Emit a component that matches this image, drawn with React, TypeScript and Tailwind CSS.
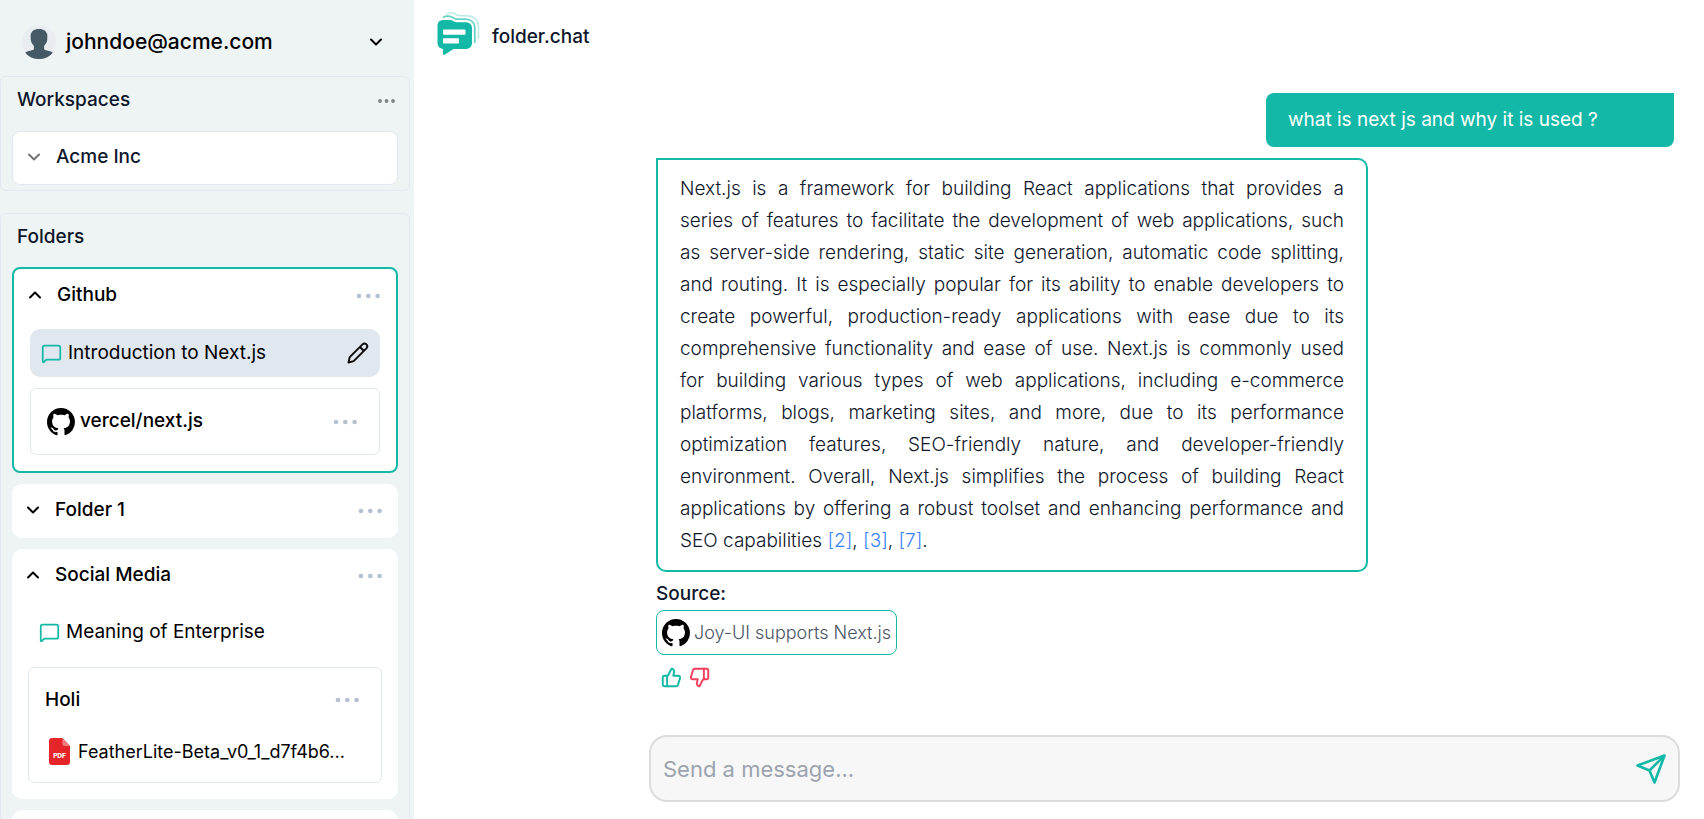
import { useState } from "react";
import type { ReactNode } from "react";
import { ChevronDown, ChevronUp, MessageSquare, ThumbsDown, ThumbsUp } from "lucide-react";

function Dots({ label }: { label: string }) {
  return (
    <button type="button" aria-label={label} className="flex shrink-0 items-center">
      <svg width="24" height="6" viewBox="0 0 24 6" fill="#b4c0d0">
        <circle cx="3" cy="3" r="2.3" />
        <circle cx="12.3" cy="3" r="2.3" />
        <circle cx="21.6" cy="3" r="2.3" />
      </svg>
    </button>
  );
}

function GithubMark() {
  return (
    <svg width="28" height="28" viewBox="0 0 16 16" fill="#000" className="shrink-0">
      <path d="M8 0C3.58 0 0 3.58 0 8c0 3.54 2.29 6.53 5.47 7.59.4.07.55-.17.55-.38 0-.19-.01-.82-.01-1.49-2.01.37-2.53-.49-2.69-.94-.09-.23-.48-.94-.82-1.13-.28-.15-.68-.52-.01-.53.63-.01 1.08.58 1.23.82.72 1.21 1.87.87 2.33.66.07-.52.28-.87.51-1.07-1.78-.2-3.64-.89-3.64-3.95 0-.87.31-1.59.82-2.15-.08-.2-.36-1.02.08-2.12 0 0 .67-.21 2.2.82.64-.18 1.32-.27 2-.27s1.36.09 2 .27c1.53-1.04 2.2-.82 2.2-.82.44 1.1.16 1.92.08 2.12.51.56.82 1.27.82 2.15 0 3.07-1.87 3.75-3.65 3.95.29.25.54.73.54 1.48 0 1.07-.01 1.93-.01 2.2 0 .21.15.46.55.38A8.01 8.01 0 0 0 16 8c0-4.42-3.58-8-8-8z" />
    </svg>
  );
}

function Avatar() {
  return (
    <svg width="34" height="34" viewBox="0 0 34 34" className="shrink-0">
      <circle cx="17" cy="17" r="17" fill="#e9edf1" />
      <path
        fill="#455a64"
        d="M17 4c-5 0-8.400 2.600-8.400 7.200 0 1.300.3 2.300.1 3.300.1 2.400 1.600 4.600 3.200 6.400v2.900c0 1-1.500 1.500-3.700 1.900-2 .4-3.800 1-5 2A17 17 0 0 0 17 34a17 17 0 0 0 13.800-6.300c-1.200-1-3-1.600-5-2-2.200-.4-3.700-.9-3.700-1.900v-2.900c1.600-1.800 3.100-4 3.200-6.400-.2-1 .1-2 .1-3.300C25.400 6.600 22 4 17 4z"
      />
    </svg>
  );
}

function Logo() {
  return (
    <svg width="44" height="44" viewBox="0 0 44 44" fill="none" className="mb-0.5 shrink-0">
      <path d="M9.500 2.200C12 .6 16 .7 18.500 2l3 1.800H30c7 0 11.500 4.500 11.500 11V27" stroke="#14b8a6" strokeOpacity=".28" strokeWidth="1.600" />
      <path d="M6 5.500C8.500 4 12 4 14.500 4.800l4.500 2.400h9c6 0 9.800 3.300 9.800 9V31" stroke="#14b8a6" strokeOpacity=".65" strokeWidth="1.800" />
      <path
        fill="#14b8a6"
        d="M6.500 8h6.500c3 0 4 2.300 7 2.300h8.500c4 0 6.500 2.200 6.500 6V31c0 3.800-2.500 6-6.500 6H16.500L8 42.600c-1.200.7-2 .3-2-1V37C2.500 36.500.5 34.500.5 31V14c0-4 2.200-6 6-6z"
      />
      <rect x="6" y="17.500" width="22.500" height="5.200" rx="1" fill="#fff" />
      <rect x="6" y="26.300" width="16" height="5.200" rx="1" fill="#fff" />
    </svg>
  );
}

function PdfIcon() {
  return (
    <svg width="21" height="27" viewBox="0 0 21 27" className="shrink-0">
      <path d="M3 0h10.500L21 8v16a3 3 0 0 1-3 3H3a3 3 0 0 1-3-3V3a3 3 0 0 1 3-3z" fill="#e5252a" />
      <path d="M13.500 0 21 8h-5.500a2 2 0 0 1-2-2z" fill="#f07c7e" />
      <text x="10.500" y="20" textAnchor="middle" fontSize="6.500" fontWeight="800" fill="#fff" fontFamily="Inter, sans-serif">
        PDF
      </text>
    </svg>
  );
}

function PencilIcon() {
  return (
    <svg width="22" height="22" viewBox="0 0 22 22" fill="none" stroke="#0a0a0a" strokeWidth="1.900" strokeLinejoin="round">
      <path d="M1.500 20.500l1.200-5.300L15.500 2.400a2.700 2.700 0 0 1 3.900 3.900L6.700 19.200z" />
      <path d="M13 5l4 4" />
    </svg>
  );
}

function ChatRow({ title, selected = false }: { title: string; selected?: boolean }) {
  return (
    <div className={selected ? "flex h-12 items-center rounded-[10px] bg-[#e1e7ef] px-[11px]" : "flex h-12 items-center rounded-[10px] px-[11px]"}>
      <button type="button" className="flex flex-1 items-center gap-1.5 text-left">
        <MessageSquare size={21} strokeWidth={2} className="text-[#14b8a6]" />
        {title}
      </button>
      {selected && (
        <button type="button" aria-label="Rename chat">
          <PencilIcon />
        </button>
      )}
    </div>
  );
}

function Folder({ name, initiallyOpen = false, active = false, children }: { name: string; initiallyOpen?: boolean; active?: boolean; children?: ReactNode }) {
  const [open, setOpen] = useState(initiallyOpen);
  const Chevron = open ? ChevronUp : ChevronDown;
  return (
    <section className={active ? "rounded-lg border-2 border-[#14b8a6] bg-white px-4 pb-4" : "rounded-[10px] bg-white px-4"}>
      <div className="flex h-[54px] items-center justify-between">
        <button type="button" aria-expanded={open} onClick={() => setOpen(!open)} className="flex items-center gap-3 pb-0.5 font-medium">
          <Chevron size={20} strokeWidth={2.4} className="-ml-[5px]" />
          {name}
        </button>
        <Dots label={`${name} options`} />
      </div>
      {open && children}
    </section>
  );
}

const ANSWER =
  "Next.js is a framework for building React applications that provides a series\u00a0of features to facilitate the development of web applications, such as\u00a0server-side rendering, static site generation, automatic code splitting, and\u00a0routing. It is especially popular for its ability to enable developers to create\u00a0powerful, production-ready applications with ease due to its comprehensive functionality and ease of use. Next.js is commonly used for\u00a0building various types of web applications, including e-commerce platforms, blogs, marketing sites, and more, due to its performance optimization features, SEO-friendly nature, and developer-friendly environment. Overall, Next.js simplifies the process of building React applications by offering a robust toolset and enhancing performance and SEO capabilities ";

function Sidebar() {
  return (
    <aside className="flex w-[414px] shrink-0 flex-col overflow-hidden bg-[#eef4f4] pr-1">
      <button type="button" className="flex h-[76px] shrink-0 items-center gap-[10px] pt-2 pr-6 pl-[22px] text-[21px] font-medium text-black">
        <Avatar />
        <span className="flex-1 text-left">johndoe@acme.com</span>
        <ChevronDown size={20} strokeWidth={2.4} />
      </button>
      <section className="shrink-0 rounded-md border border-[#e2e8f0] px-[11px] pb-[5px]">
        <div className="flex h-[54px] items-center justify-between pr-0.5 pb-2 pl-[5px]">
          <h2 className="font-medium">Workspaces</h2>
          <button type="button" aria-label="Workspace options" className="pt-0.5">
            <svg width="18" height="4" viewBox="0 0 18 4" fill="#7d8286">
              <circle cx="2" cy="2" r="1.900" />
              <circle cx="8.500" cy="2" r="1.900" />
              <circle cx="15" cy="2" r="1.900" />
            </svg>
          </button>
        </div>
        <button type="button" className="flex h-[54px] w-full items-center gap-3 rounded-lg border border-[#e2e8f0] bg-white px-[11px] pb-0.5 font-medium">
          <ChevronDown size={20} strokeWidth={2.4} className="text-neutral-500" />
          Acme Inc
        </button>
      </section>
      <section className="mt-[22px] shrink-0 rounded-t-md border border-b-0 border-[#e2e8f0] px-[11px]">
        <h2 className="flex h-[53px] items-center pb-2 pl-[5px] font-medium">Folders</h2>
        <div className="flex flex-col gap-[11px] text-black">
          <Folder name="Github" initiallyOpen active>
            <div className="flex flex-col gap-[11px] pt-1.5">
              <ChatRow title="Introduction to Next.js" selected />
              <div className="flex h-[67px] items-center gap-[5px] rounded-md border border-[#e2e8f0] pr-[22px] pl-4">
                <GithubMark />
                <span className="flex-1 pb-0.5 font-medium">vercel/next.js</span>
                <Dots label="Repository options" />
              </div>
            </div>
          </Folder>
          <Folder name="Folder 1" />
          <Folder name="Social Media" initiallyOpen>
            <div className="flex flex-col gap-[11px] pt-[5px] pb-4">
              <ChatRow title="Meaning of Enterprise" />
              <div className="rounded-md border border-[#e2e8f0] pr-[22px] pl-4">
                <div className="flex h-[70px] items-center justify-between pb-1.5 font-medium">
                  Holi
                  <Dots label="Holi options" />
                </div>
                <div className="flex h-11 items-start gap-2 pl-1 text-lg">
                  <PdfIcon />
                  <span>FeatherLite-Beta_v0_1_d7f4b6...</span>
                </div>
              </div>
            </div>
          </Folder>
          <div className="h-[54px] rounded-[10px] bg-white" />
        </div>
      </section>
    </aside>
  );
}

export default function App() {
  return (
    <div className="flex h-screen overflow-hidden bg-white font-['Inter',sans-serif] text-[19px] leading-7 text-slate-900">
      <Sidebar />
      <main className="flex min-w-0 flex-1 flex-col">
        <header className="flex h-[70px] shrink-0 items-center gap-[11px] pl-[23px] font-medium">
          <Logo />
          <span className="pt-1">folder.chat</span>
        </header>
        <div className="flex min-h-0 flex-1 flex-col overflow-hidden pt-[23px] pr-[30px] pl-[242px]">
          <div className="w-[408px] self-end rounded-lg rounded-tr-none bg-[#14b8a6] px-[22px] py-[13px] text-white">what is next js and why it is used ?</div>
          <p className="mt-[11px] w-[712px] rounded-[10px] rounded-tl-none border-2 border-[#14b8a6] px-[22px] py-[13px] text-justify leading-8 font-[350]">
            {ANSWER}
            <a href="#source-2" className="text-[#3b82f6]">[2]</a>, <a href="#source-3" className="text-[#3b82f6]">[3]</a>, <a href="#source-7" className="text-[#3b82f6]">[7]</a>.
          </p>
          <h3 className="mt-2 font-medium">Source:</h3>
          <a href="#source" className="mt-0.5 flex h-[45px] items-center gap-1 self-start rounded-lg border border-[#14b8a6] px-[5px] text-lg font-light text-gray-600">
            <GithubMark />
            Joy-UI supports Next.js
          </a>
          <div className="mt-3 flex gap-[7px] pl-[5px]">
            <button type="button" aria-label="Good answer" className="text-[#14b8a6]">
              <ThumbsUp size={21} strokeWidth={2.2} />
            </button>
            <button type="button" aria-label="Bad answer" className="text-[#f43f5e]">
              <ThumbsDown size={21} strokeWidth={2.2} />
            </button>
          </div>
        </div>
        <form className="mr-6 mb-[17px] ml-[235px] flex h-[67px] shrink-0 items-center rounded-[18px] border-2 border-[#dcdcdc] bg-[#f7f7f7] px-3" onSubmit={(e) => e.preventDefault()}>
          <input aria-label="Message" placeholder="Send a message..." className="min-w-0 flex-1 bg-transparent text-[22px] outline-none placeholder:text-[#9ca3af]" />
          <button type="submit" aria-label="Send">
            <svg width="30" height="30" viewBox="0 0 30 30" fill="none" stroke="#14b8a6" strokeWidth="2.600" strokeLinejoin="round">
              <path d="M28.500 1.500 1.500 11.500l12 5L18.500 28.500z" />
              <path d="M28.500 1.500 13.500 16.500" />
            </svg>
          </button>
        </form>
      </main>
    </div>
  );
}
